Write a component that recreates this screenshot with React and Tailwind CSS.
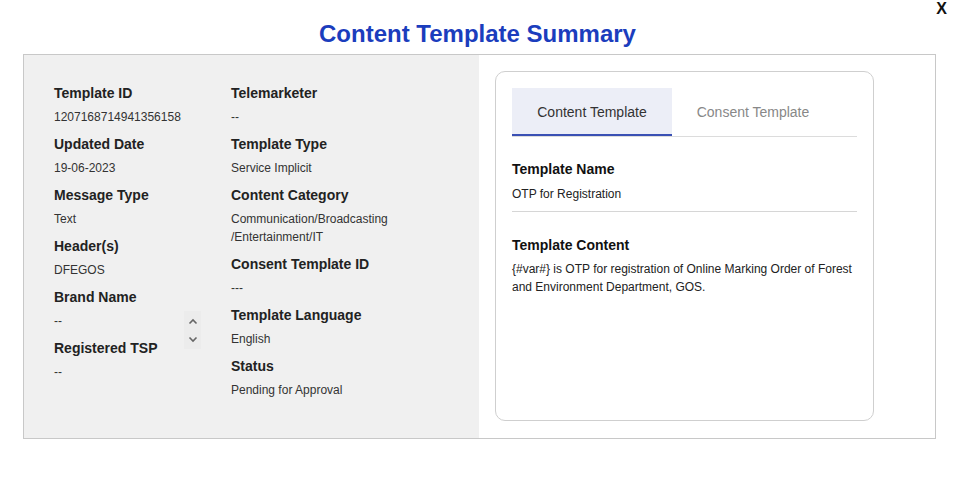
import React, { useState } from "react";

const leftCol = [
  { label: "Template ID", value: "1207168714941356158" },
  { label: "Updated Date", value: "19-06-2023" },
  { label: "Message Type", value: "Text" },
  { label: "Header(s)", value: "DFEGOS" },
  { label: "Brand Name", value: "--" },
  { label: "Registered TSP", value: "--" },
];

const rightCol = [
  { label: "Telemarketer", value: ["--"] },
  { label: "Template Type", value: ["Service Implicit"] },
  { label: "Content Category", value: ["Communication/Broadcasting", "/Entertainment/IT"] },
  { label: "Consent Template ID", value: ["---"] },
  { label: "Template Language", value: ["English"] },
  { label: "Status", value: ["Pending for Approval"] },
];

const templateContent =
  "{#var#} is OTP for registration of Online Marking Order of Forest and Environment Department, GOS.";

function Field({ label, lines }) {
  return (
    <div className="flex flex-col pb-[8px]">
      <div className="h-[20px] leading-[20px] text-[14px] font-bold text-[#222]">{label}</div>
      <div className="mt-[5px]">
        {lines.map((l, i) => (
          <div key={i} className="h-[18px] leading-[18px] text-[12px] text-[#333]">
            {l}
          </div>
        ))}
      </div>
    </div>
  );
}

export default function App() {
  const [tab, setTab] = useState("content");

  return (
    <div className="w-[955px] h-[490px] bg-white relative font-['Liberation_Sans',Arial,sans-serif]">
      <button className="absolute right-[8px] top-[-3px] text-[16px] font-bold text-[#111]">X</button>

      <h1 className="pt-[19px] h-[54px] text-center text-[24px] leading-[30px] font-bold text-[#1b3dbd]">
        Content Template Summary
      </h1>

      <div className="ml-[23px] w-[913px] h-[385px] border border-[#c8c8c8] flex">
        <div className="w-[455px] bg-[#f0f0f0] flex pl-[30px] pt-[28px]">
          <div className="w-[177px] relative">
            {leftCol.map((f) => (
              <Field key={f.label} label={f.label} lines={[f.value]} />
            ))}
            <div className="absolute left-[130px] top-[228px] w-[17px] h-[38px] bg-[#ececec] flex flex-col items-center justify-center gap-[11px] text-[#666]">
              <svg width="10" height="7" viewBox="0 0 10 7"><path d="M1.5 5.5 5 2l3.5 3.5" fill="none" stroke="currentColor" strokeWidth="1.6" /></svg>
              <svg width="10" height="7" viewBox="0 0 10 7"><path d="M1.5 1.5 5 5l3.5-3.5" fill="none" stroke="currentColor" strokeWidth="1.6" /></svg>
            </div>
          </div>
          <div className="flex-1">
            {rightCol.map((f) => (
              <Field key={f.label} label={f.label} lines={f.value} />
            ))}
          </div>
        </div>

        <div className="flex-1 pl-[16px] pt-[16px]">
          <div className="w-[379px] h-[350px] border border-[#cfcfcf] rounded-[10px] px-[16px] pt-[16px]">
            <div className="flex border-b border-[#dcdcdc]">
              <button
                onClick={() => setTab("content")}
                className={`w-[160px] h-[48px] pt-[2px] text-[14px] border-b-2 ${tab === "content" ? "bg-[#eceef7] border-[#3a50b4] text-[#333]" : "border-transparent text-[#888]"}`}
              >
                Content Template
              </button>
              <button
                onClick={() => setTab("consent")}
                className={`w-[162px] h-[48px] pt-[2px] text-[14px] border-b-2 ${tab === "consent" ? "bg-[#eceef7] border-[#3a50b4] text-[#333]" : "border-transparent text-[#888]"}`}
              >
                Consent Template
              </button>
            </div>

            <div className="pt-[22px] pb-[8px] border-b border-[#d6d6d6]">
              <div className="text-[14px] font-bold text-[#111] leading-[20px]">Template Name</div>
              <div className="text-[12px] text-[#222] leading-[18px] mt-[6px]">OTP for Registration</div>
            </div>

            <div className="pt-[23px]">
              <div className="text-[14px] font-bold text-[#111] leading-[20px]">Template Content</div>
              <p className="text-[12px] text-[#222] leading-[18px] mt-[5px]">{templateContent}</p>
            </div>
          </div>
        </div>
      </div>
    </div>
  );
}
